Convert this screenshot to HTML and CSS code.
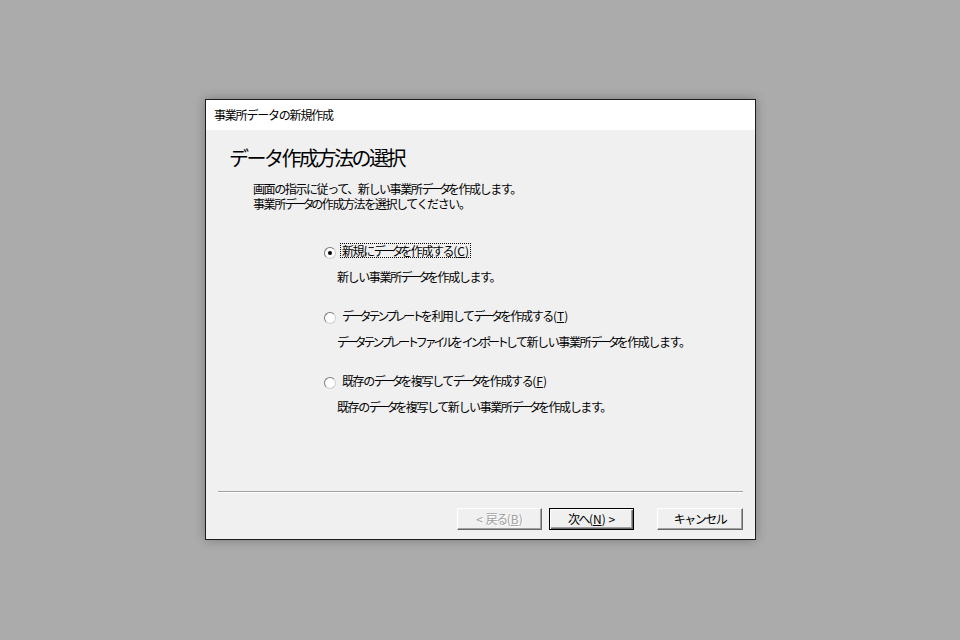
FILE: index.html
```html
<!DOCTYPE html>
<html lang="ja">
<head>
<meta charset="utf-8">
<title>事業所データの新規作成</title>
<link rel="stylesheet" href="styles.css">
</head>
<body>
<div class="window">
  <div class="titlebar">事業所データの新規作成</div>
  <div class="content">
    <h1 class="heading">データ作成方法の選択</h1>
    <div class="intro">
      <div class="intro-line">画面の指示に従って、新しい事業所<span class="kt">データ</span>を作成します。</div>
      <div class="intro-line">事業所<span class="kt">データ</span>の作成方法を選択してください。</div>
    </div>
    <div class="options">
      <div class="option">
        <div class="opt-row">
          <span class="radio checked"></span>
          <span class="label focus">新規に<span class="kt">データ</span>を作成する<span class="lat">(<u>C</u>)</span></span>
        </div>
        <div class="opt-desc">新しい事業所<span class="kt">データ</span>を作成します。</div>
      </div>
      <div class="option">
        <div class="opt-row">
          <span class="radio"></span>
          <span class="label"><span class="kt">データテンプレート</span>を利用して<span class="kt">データ</span>を作成する<span class="lat">(<u>T</u>)</span></span>
        </div>
        <div class="opt-desc"><span class="kt">データテンプレートファイル</span>を<span class="kt">インポート</span>して新しい事業所<span class="kt">データ</span>を作成します。</div>
      </div>
      <div class="option">
        <div class="opt-row">
          <span class="radio"></span>
          <span class="label">既存の<span class="kt">データ</span>を複写して<span class="kt">データ</span>を作成する<span class="lat">(<u>F</u>)</span></span>
        </div>
        <div class="opt-desc">既存の<span class="kt">データ</span>を複写して新しい事業所<span class="kt">データ</span>を作成します。</div>
      </div>
    </div>
    <div class="footer">
      <div class="separator"></div>
      <div class="buttons">
        <button class="btn disabled"><span class="lat">&lt; </span>戻る<span class="lat">(<u>B</u>)</span></button>
        <button class="btn default">次へ<span class="lat">(<u>N</u>) &gt;</span></button>
        <button class="btn cancel">キャンセル</button>
      </div>
    </div>
  </div>
</div>
</body>
</html>
```

FILE: styles.css
```css
html, body {
  margin: 0;
  padding: 0;
}
body {
  width: 960px;
  height: 640px;
  background: #ababab;
  box-sizing: border-box;
  padding: 99px 0 0 205px;
  font-family: "Noto Sans CJK JP", "Noto Sans", sans-serif;
  font-size: 12px;
  color: #000;
}
.window {
  width: 549px;
  height: 439px;
  border: 1px solid #1c1c1c;
  box-shadow: 0 0 10px rgba(0, 0, 0, 0.28);
  display: flex;
  flex-direction: column;
  background: #f0f0f0;
}
.titlebar {
  height: 30px;
  line-height: 30px;
  background: #fff;
  padding-left: 8px;
  font-size: 12px;
  letter-spacing: -1.2px;
}
.content {
  flex: 1;
  display: flex;
  flex-direction: column;
  background: #f0f0f0;
}
.heading {
  margin: 16px 0 0 23px;
  font-size: 20px;
  font-weight: normal;
  line-height: 24px;
  letter-spacing: -2.5px;
}
.intro,
.label,
.opt-desc {
  letter-spacing: -1.4px;
}
.kt {
  letter-spacing: -3.2px;
}
.intro {
  margin: 11px 0 0 47px;
  line-height: 15px;
}
.lat {
  letter-spacing: 0;
}
.options {
  margin: 31px 0 0 118px;
  display: flex;
  flex-direction: column;
  gap: 22px;
}
.opt-row {
  display: flex;
  align-items: center;
  height: 16px;
}
.radio {
  width: 12px;
  height: 12px;
  box-sizing: border-box;
  border-radius: 50%;
  border: 1px solid;
  border-color: #7a7a7a #cfcfcf #cfcfcf #7a7a7a;
  background: #fff;
  display: flex;
  align-items: center;
  justify-content: center;
  margin-top: 5px;
}
.radio.checked::after {
  content: "";
  width: 4px;
  height: 4px;
  border-radius: 50%;
  background: #000;
}
.label {
  margin-left: 4px;
  line-height: 13px;
  padding: 0 1px;
  border: 1px dotted transparent;
}
.label.focus {
  border-color: #000;
}
.opt-desc {
  margin: 11px 0 0 13px;
  line-height: 16px;
}
.footer {
  margin-top: auto;
  padding: 0 12px 9px;
}
.separator {
  border-top: 1px solid #a0a0a0;
  border-bottom: 1px solid #fff;
}
.buttons {
  margin-top: 15px;
  display: flex;
  justify-content: flex-end;
}
.btn {
  width: 85px;
  height: 22px;
  box-sizing: border-box;
  margin: 0;
  padding: 0;
  font-family: inherit;
  font-size: 12px;
  letter-spacing: -1.5px;
  background: #f0f0f0;
  border: 1px solid;
  border-color: #fff #696969 #696969 #fff;
  box-shadow: inset -1px -1px #a0a0a0;
  color: #000;
  line-height: 18px;
}
.btn.disabled {
  color: #a0a0a0;
  text-shadow: 1px 1px #fff;
}
.btn.default {
  margin-left: 7px;
  border: 1px solid #000;
  box-shadow: inset 1px 1px #fff, inset -1px -1px #696969, inset -2px -2px #a0a0a0;
}
.btn.cancel {
  width: 86px;
  margin-left: 23px;
}
```
